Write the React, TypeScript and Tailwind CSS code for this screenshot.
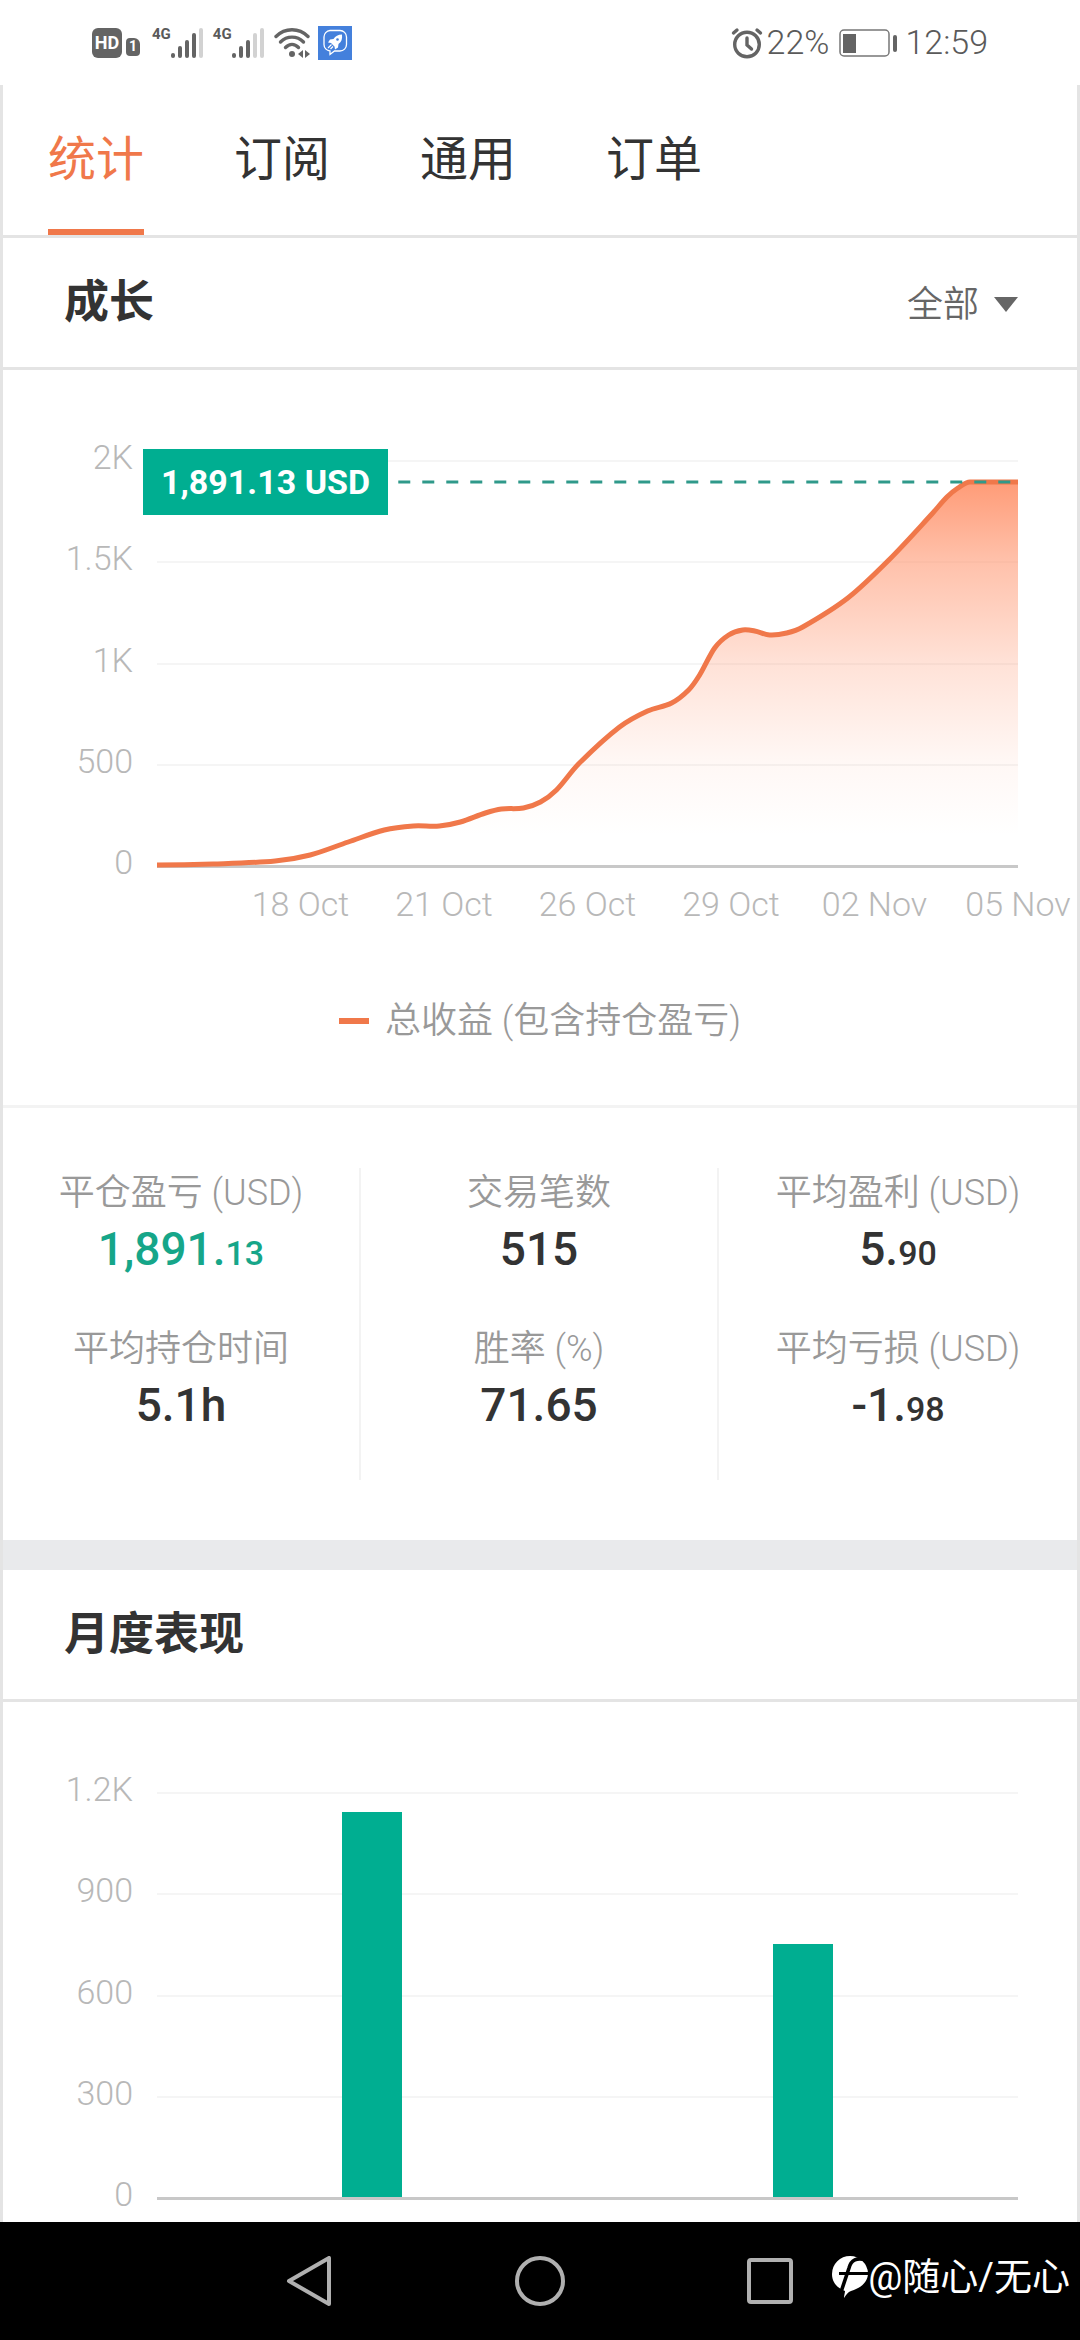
import type { ReactNode } from "react";
import { useState } from "react";

type Stat = {
  label: string;
  value: string;
  small?: string;
  positive?: boolean;
};

const TABS = ["统计", "订阅", "通用", "订单"];

const GROWTH_TICKS = ["2K", "1.5K", "1K", "500", "0"];
const GROWTH_DATES = ["18 Oct", "21 Oct", "26 Oct", "29 Oct", "02 Nov", "05 Nov"];

const MONTH_TICKS = ["1.2K", "900", "600", "300", "0"];
const MONTH_MAX = 1200;
const MONTHS = [
  { name: "Oct", value: 1142 },
  { name: "Nov", value: 750 },
];

const STATS: Stat[][] = [
  [
    { label: "平仓盈亏 (USD)", value: "1,891.", small: "13", positive: true },
    { label: "平均持仓时间", value: "5.1h" },
  ],
  [
    { label: "交易笔数", value: "515" },
    { label: "胜率 (%)", value: "71.65" },
  ],
  [
    { label: "平均盈利 (USD)", value: "5.", small: "90" },
    { label: "平均亏损 (USD)", value: "-1.", small: "98" },
  ],
];

// x runs 0-860, y runs 0 (2K line) to 406 (zero line)
const GROWTH_POINTS: [number, number][] = [
  [0, 405], [56, 404], [118, 401], [153, 395], [191, 382], [227, 370],
  [256, 366], [282, 366], [303, 362], [328, 353], [344, 349], [366, 348], [383, 342],
  [399, 330], [421, 304], [462, 267], [490, 251], [514, 243], [531, 230], [542, 215],
  [557, 188], [571, 175], [585, 170], [597, 171], [612, 175], [629, 173], [645, 167],
  [690, 138], [731, 100], [774, 54], [789, 37], [800, 28], [812, 22], [860, 22],
];

function smoothPath(points: [number, number][]) {
  const slopes = points.map((_, i) => {
    if (i === 0 || i >= points.length - 2) return 0;
    const [x0, y0] = points[i - 1];
    const [x1, y1] = points[i + 1];
    return (y1 - y0) / (x1 - x0);
  });
  let d = `M${points[0][0]} ${points[0][1]}`;
  for (let i = 1; i < points.length; i++) {
    const [ax, ay] = points[i - 1];
    const [bx, by] = points[i];
    const step = (bx - ax) / 3;
    d += ` C${ax + step} ${ay + slopes[i - 1] * step} ${bx - step} ${by - slopes[i] * step} ${bx} ${by}`;
  }
  return d;
}

function IconSignal({ level }: { level: number }) {
  const bars = [5, 12, 18, 25, 30];
  return (
    <svg className="h-8 w-8" viewBox="0 0 32 32" aria-hidden>
      {bars.map((h, i) => (
        <rect
          key={h}
          x={i * 7}
          y={31 - h}
          width="4"
          height={h}
          rx="2"
          fill={i < level ? "#646464" : "#d2d2d2"}
        />
      ))}
    </svg>
  );
}

function IconWifi() {
  return (
    <svg className="h-8 w-9" viewBox="0 0 36 32" fill="none" stroke="#646464" strokeWidth="3.4" strokeLinecap="round" aria-hidden>
      <path d="M2 9.500C11 .5 25 .5 34 9.500" />
      <path d="M6.500 15c6.500-6.500 16.500-6.500 23 0" />
      <path d="M11.500 20.500c4-4 9-4 13 0" />
      <circle cx="18" cy="27" r="3" fill="#646464" stroke="none" />
      <path d="M29 23v8l-5-4zM31 23v8l5-4z" fill="#646464" stroke="none" />
    </svg>
  );
}

function IconRocketChat() {
  return (
    <svg className="h-[34px] w-[34px]" viewBox="0 0 34 34" fill="none" aria-hidden>
      <rect width="34" height="34" fill="#4480dc" />
      <path
        d="M12 4.500h10a6.500 6.500 0 0 1 6.500 6.500v7.500a6.500 6.500 0 0 1-6.500 6.500h-5.500L12 28.500V25a6.500 6.500 0 0 1-6-6.500V11A6.500 6.500 0 0 1 12 4.500Z"
        stroke="#fff"
        strokeWidth="1.300"
      />
      <path d="M24 8.500c-4 0-6.500 1.500-8.500 4.500l-3.500.500-2 3 3 .500 3.500 3.500.500 3 3-2 .500-3.500c3-2 4-5 3.500-9.500Z" fill="#fff" />
      <circle cx="19.500" cy="13.500" r="1.300" fill="#4480dc" />
      <path d="m13.500 18.500-3.500 3.500M15 20.500 12.500 23" stroke="#fff" strokeWidth="1.200" />
    </svg>
  );
}

function IconAlarm() {
  return (
    <svg className="h-8 w-8" viewBox="0 0 32 32" fill="none" stroke="#646464" strokeWidth="3.400" strokeLinecap="round" aria-hidden>
      <circle cx="16" cy="17.500" r="12.300" />
      <path d="M16 11v7l4.500 4M2.500 6 6 3M29.500 6 26 3" />
    </svg>
  );
}

function IconBattery() {
  return (
    <svg className="h-7 w-[58px]" viewBox="0 0 58 28" aria-hidden>
      <rect x="1" y="1" width="49" height="26" rx="4" fill="none" stroke="#777" strokeWidth="1.500" />
      <rect x="4" y="5" width="13" height="19" fill="#646464" />
      <rect x="54" y="6" width="4" height="17" rx="2" fill="#646464" />
    </svg>
  );
}

function IconFollow() {
  return (
    <svg className="h-11 w-9" viewBox="0 0 36 44" aria-hidden>
      <path
        d="M18 1a18 18 0 0 1 18 17c0 9-7 15-17 18-3 1-5 4-7 7 0-3 1-5 1-7C5 33 0 27 0 19A18 18 0 0 1 18 1Z"
        fill="#fff"
      />
      <path d="M34 5c-9-3-15 0-17 8L9 37" fill="none" stroke="#000" strokeWidth="3.600" />
      <path d="M7 18.500h29" stroke="#000" strokeWidth="3" />
    </svg>
  );
}

function StatusBar() {
  return (
    <header className="flex h-[85px] items-center justify-between px-[92px] text-[34px] font-[350] text-[#5a5a5a]">
      <div className="flex items-center">
        <span className="flex h-[30px] w-[30px] items-center justify-center rounded-md bg-[#646464] text-[18px] font-bold text-white">
          HD
        </span>
        <span className="ml-1 mt-2 flex h-[18px] w-[14px] items-center justify-center rounded-sm rounded-tr-md bg-[#646464] text-[14px] font-bold text-white">
          1
        </span>
        <span className="ml-3 flex items-start">
          <span className="text-[15px] font-bold leading-[15px]">4G</span>
          <IconSignal level={4} />
        </span>
        <span className="ml-[10px] flex items-start">
          <span className="text-[15px] font-bold leading-[15px]">4G</span>
          <IconSignal level={3} />
        </span>
        <span className="ml-[10px] mr-2">
          <IconWifi />
        </span>
        <IconRocketChat />
      </div>
      <div className="flex items-center">
        <IconAlarm />
        <span className="ml-1">22%</span>
        <span className="ml-[10px] mr-2">
          <IconBattery />
        </span>
        <span>12:59</span>
      </div>
    </header>
  );
}

function Tabs() {
  const [active, setActive] = useState(TABS[0]);

  return (
    <nav className="flex h-[153px] gap-[90px] border-b-[3px] border-[#e4e4e4] pl-[45px]">
      {TABS.map((tab) => (
        <button
          key={tab}
          type="button"
          onClick={() => setActive(tab)}
          className={`border-b-[6px] pt-[6px] text-[48px] ${
            active === tab ? "border-[#f0784a] text-[#f0784a]" : "border-transparent text-[#333]"
          }`}
        >
          {tab}
        </button>
      ))}
    </nav>
  );
}

function SectionHeader({ title, children }: { title: string; children?: ReactNode }) {
  return (
    <div className="flex h-[132px] items-center justify-between border-b-[3px] border-[#e4e4e4] pl-[61px] pr-[59px]">
      <h2 className="text-[45px] font-bold text-[#333]">{title}</h2>
      {children}
    </div>
  );
}

function RangeSelect() {
  return (
    <label className="flex items-center gap-[14px] pt-1 text-[36px] text-[#666]">
      <select aria-label="时间范围" className="appearance-none bg-transparent font-[350] outline-none">
        <option>全部</option>
      </select>
      <svg className="h-4 w-6" viewBox="0 0 24 16" fill="currentColor" aria-hidden>
        <path d="M0 0h24L12 15Z" />
      </svg>
    </label>
  );
}

function ChartFrame({ ticks, children, footer }: { ticks: string[]; children: ReactNode; footer?: ReactNode }) {
  return (
    <div className="flex gap-6 pr-[59px] pt-[67px] text-[34px] font-[350] text-[#b8b8b8]">
      <div className="flex h-[445px] w-[130px] shrink-0 flex-col justify-between text-right">
        {ticks.map((tick) => (
          <span key={tick} className="leading-10">
            {tick}
          </span>
        ))}
      </div>
      <div className="min-w-0 flex-1 pt-[23px]">
        <div className="relative flex h-[408px] flex-col border-b-[3px] border-[#c8c8c8]">
          {ticks.slice(1).map((tick) => (
            <div key={tick} className="flex-1 border-t-2 border-[#f5f5f5]" />
          ))}
          {children}
        </div>
        {footer}
      </div>
    </div>
  );
}

function GrowthChart() {
  const line = smoothPath(GROWTH_POINTS);

  return (
    <ChartFrame
      ticks={GROWTH_TICKS}
      footer={
        <div className="mt-4 flex">
          {GROWTH_DATES.map((date) => (
            <div key={date} className="flex flex-1 justify-end">
              <span className="flex w-0 justify-center whitespace-nowrap leading-10">{date}</span>
            </div>
          ))}
        </div>
      }
    >
      <svg
        className="absolute inset-x-0 top-0 h-[408px] w-full overflow-visible"
        viewBox="0 0 860 408"
        preserveAspectRatio="none"
        fill="none"
        aria-hidden
      >
        <defs>
          <linearGradient id="growth-fill" gradientUnits="userSpaceOnUse" x1="0" y1="22" x2="0" y2="406">
            <stop offset="0" stopColor="#ff9670" stopOpacity="0.95" />
            <stop offset="0.2" stopColor="#ff9670" stopOpacity="0.6" />
            <stop offset="0.47" stopColor="#ff9670" stopOpacity="0.28" />
            <stop offset="0.73" stopColor="#ff9670" stopOpacity="0.07" />
            <stop offset="0.92" stopColor="#ff9670" stopOpacity="0" />
          </linearGradient>
        </defs>
        <path d={`${line} V406 H0 Z`} fill="url(#growth-fill)" />
        <path d={line} stroke="#f0784a" strokeWidth="5" vectorEffect="non-scaling-stroke" />
        <path d="M241 22H860" stroke="#2f998a" strokeWidth="3" strokeDasharray="12 12" vectorEffect="non-scaling-stroke" />
      </svg>
      <div className="absolute -left-[14px] -top-[11px] flex h-[66px] w-[245px] items-center justify-center bg-[#00ae91] font-bold text-white">
        1,891.13 USD
      </div>
    </ChartFrame>
  );
}

function MonthChart() {
  return (
    <ChartFrame ticks={MONTH_TICKS}>
      <div className="absolute inset-0 flex items-end">
        {MONTHS.map((month) => (
          <div key={month.name} className="flex h-full flex-1 items-end justify-center">
            <div className="w-[60px] bg-[#00ae91]" style={{ height: `${(month.value / MONTH_MAX) * 100}%` }} />
          </div>
        ))}
      </div>
    </ChartFrame>
  );
}

function StatCell({ stat }: { stat: Stat }) {
  return (
    <div className="h-[156px] pt-[3px] text-center">
      <dt className="text-[36px] font-[350] leading-[44px] text-[#999]">{stat.label}</dt>
      <dd
        className={`text-[46px] font-medium leading-[68px] ${stat.positive ? "text-[#16a689]" : "text-[#333]"}`}
      >
        {stat.value}
        {stat.small ? <span className="text-[34px]">{stat.small}</span> : null}
      </dd>
    </div>
  );
}

function NavBar() {
  return (
    <footer className="relative flex h-[118px] items-center justify-center gap-[180px] bg-black text-[#b0b0b0]">
      <button type="button" aria-label="返回">
        <svg className="h-[50px] w-[50px]" viewBox="0 0 50 50" fill="none" stroke="currentColor" strokeWidth="4" strokeLinejoin="round" aria-hidden>
          <path d="M44 2v46L4 25Z" />
        </svg>
      </button>
      <button type="button" aria-label="主屏幕">
        <svg className="h-[50px] w-[50px]" viewBox="0 0 50 50" fill="none" stroke="currentColor" strokeWidth="4" aria-hidden>
          <circle cx="25" cy="25" r="23" />
        </svg>
      </button>
      <button type="button" aria-label="最近任务">
        <svg className="h-[50px] w-[50px]" viewBox="0 0 50 50" fill="none" stroke="currentColor" strokeWidth="4" aria-hidden>
          <rect x="4" y="4" width="42" height="42" rx="2" />
        </svg>
      </button>
      <div className="absolute right-[10px] top-[30px] flex items-center text-[38px] leading-[50px] text-white">
        <IconFollow />
        @随心/无心
      </div>
    </footer>
  );
}

export default function App() {
  return (
    <div className="min-h-dvh bg-white font-['Roboto','Noto_Sans_CJK_SC',sans-serif]">
      <StatusBar />
      <main className="border-x-[3px] border-[#e4e4e4]">
        <Tabs />

        <section>
          <SectionHeader title="成长">
            <RangeSelect />
          </SectionHeader>
          <GrowthChart />
          <div className="mt-[77px] flex items-center justify-center gap-4 text-[36px] font-[350] leading-10 text-[#999]">
            <span className="h-[6px] w-[30px] bg-[#f0784a]" />
            总收益 (包含持仓盈亏)
          </div>
          <dl className="mt-16 grid grid-cols-3 divide-x-2 divide-[#f3f3f3] border-t-[3px] border-[#f3f3f3] py-[60px]">
            {STATS.map((column) => (
              <div key={column[0].label}>
                {column.map((stat) => (
                  <StatCell key={stat.label} stat={stat} />
                ))}
              </div>
            ))}
          </dl>
        </section>

        <div className="h-[30px] bg-[#e9eaec]" />

        <section className="pb-2">
          <SectionHeader title="月度表现" />
          <MonthChart />
        </section>
      </main>
      <NavBar />
    </div>
  );
}
